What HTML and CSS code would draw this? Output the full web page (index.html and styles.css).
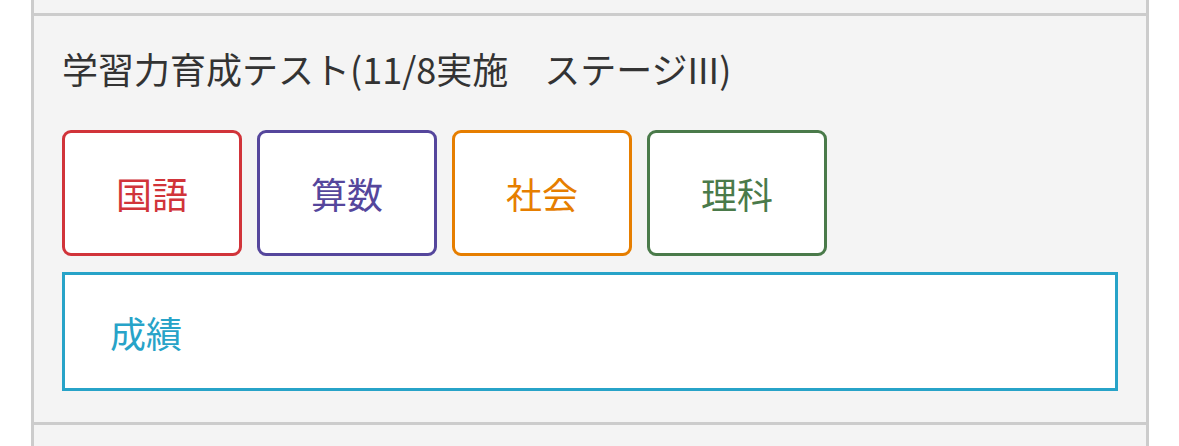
FILE: index.html
```html
<!DOCTYPE html>
<html lang="ja">
<head>
<meta charset="utf-8">
<link rel="stylesheet" href="styles.css">
</head>
<body>
<div class="list">
  <div class="item item-prev"></div>
  <div class="item">
    <h2 class="title">学習力育成テスト(11/8実施　ステージIII)</h2>
    <div class="subjects">
      <a class="subject kokugo">国語</a>
      <a class="subject sansu">算数</a>
      <a class="subject shakai">社会</a>
      <a class="subject rika">理科</a>
    </div>
    <a class="result">成績</a>
  </div>
  <div class="item item-next"></div>
</div>
</body>
</html>
```

FILE: styles.css
```css
html, body {
  margin: 0;
  padding: 0;
  background: #ffffff;
}
body {
  font-family: "Noto Sans CJK JP", "Noto Sans", sans-serif;
  color: #333333;
}
.list {
  margin-left: 31px;
  width: 1118px;
  height: 446px;
  overflow: hidden;
  background: #f4f4f4;
  border-left: 3px solid #cccccc;
  border-right: 3px solid #cccccc;
  box-sizing: border-box;
}
.item {
  border-bottom: 3px solid #cccccc;
  padding: 0 28px 31px 28px;
}
.item-prev {
  height: 13px;
  padding: 0;
}
.item-next {
  height: 40px;
  padding: 0;
  border-bottom: none;
}
.title {
  margin: 0 0 37px 0;
  padding-top: 27px;
  font-size: 36px;
  font-weight: normal;
  line-height: 50px;
  color: #333333;
}
.subjects {
  display: flex;
  gap: 15px;
}
.subject {
  width: 180px;
  height: 126px;
  box-sizing: border-box;
  border: 3px solid;
  border-radius: 9px;
  background: #ffffff;
  display: flex;
  align-items: center;
  justify-content: center;
  font-size: 36px;
  line-height: 1;
}
.kokugo { color: #d1343a; border-color: #d1343a; }
.sansu { color: #55469c; border-color: #55469c; }
.shakai { color: #e67e00; border-color: #e67e00; }
.rika { color: #4a7a4a; border-color: #4a7a4a; }
.result {
  display: flex;
  align-items: center;
  margin-top: 16px;
  height: 119px;
  box-sizing: border-box;
  border: 3px solid #27a3c8;
  background: #ffffff;
  padding-left: 45px;
  font-size: 36px;
  line-height: 1;
  color: #27a3c8;
}
```
